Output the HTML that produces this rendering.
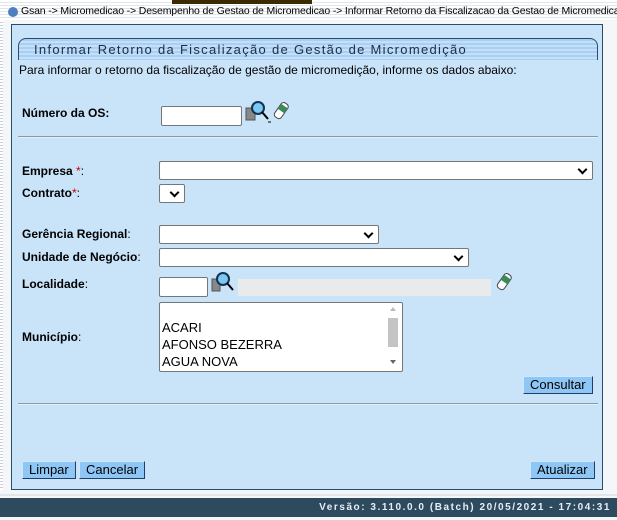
<!DOCTYPE html><html><head><meta charset="utf-8"><style>
body{margin:0;width:617px;height:520px;background:#f4f6f8;font-family:"Liberation Sans",sans-serif;position:relative;overflow:hidden;font-size:12px;color:#000}
.a{position:absolute}
.lbl{position:absolute;left:22px;font-weight:bold;font-size:12px}
.lbl span{font-weight:normal}
.red{color:#c00;font-weight:normal}
.in{position:absolute;background:#fff;border:1px solid #767676;border-radius:2px;box-sizing:border-box}
.sel:after{content:"";position:absolute;right:6px;top:4px;width:5px;height:5px;border-right:2px solid #000;border-bottom:2px solid #000;transform:rotate(45deg)}
.btn{position:absolute;background:#8ec7f5;border:1px solid #1f3f66;border-top-color:#cfe7fb;border-left-color:#cfe7fb;font-size:13px;line-height:16px;padding:0 6px;color:#000}
.hr{position:absolute;left:18px;width:580px;height:1px;background:#8a9aa8;border-bottom:1px solid #e6eef5}
</style></head><body>
<div class="a" style="left:0;top:0;width:617px;height:20px;background:repeating-linear-gradient(#fff 0 2px,#dfe6ec 2px 3px)"></div>
<div class="a" style="left:172px;top:0;width:140px;height:4px;background:#3a2c00"></div>
<div class="a" style="left:8px;top:7px;width:10px;height:10px;border-radius:50%;background:#4f7fc0"></div>
<div class="a" style="left:21px;top:5px;font-size:10.5px;white-space:nowrap;letter-spacing:-0.15px">Gsan -&gt; Micromedicao -&gt; Desempenho de Gestao de Micromedicao -&gt; Informar Retorno da Fiscalizacao da Gestao de Micromedicao</div>
<div class="a" style="left:0;top:20px;width:3px;height:470px;background:repeating-linear-gradient(#fff 0 2px,#ccd 2px 3px)"></div>
<div class="a" style="left:11px;top:24px;width:592px;height:466px;background:#c9e3f9;border:1px solid #2a4a70;box-sizing:border-box"></div>
<div class="a" style="left:18px;top:38px;width:580px;height:22px;border:1px solid #2a4a70;border-bottom:none;border-radius:8px 8px 0 0;box-sizing:border-box;background:repeating-linear-gradient(#a9d0f2 0 2px,#c4e0f8 2px 4px)"></div>
<div class="a" style="left:34px;top:42px;font-size:13px;letter-spacing:1.3px;color:#1c2e44">Informar Retorno da Fiscalização de Gestão de Micromedição</div>
<div class="a" style="left:19px;top:63px;font-size:12px">Para informar o retorno da fiscalização de gestão de micromedição, informe os dados abaixo:</div>
<div class="lbl" style="top:106px">Número da OS:</div>
<div class="in" style="left:161px;top:106px;width:81px;height:20px"></div>
<svg class="a" style="left:244px;top:100px" width="46" height="24"><rect x="2" y="8" width="9" height="12" fill="#888" stroke="#555"/><circle cx="14" cy="8" r="6" fill="#7cc8f0" stroke="#135" stroke-width="2"/><line x1="18" y1="12" x2="24" y2="19" stroke="#000" stroke-width="2"/><line x1="24" y1="22" x2="27" y2="22" stroke="#000"/><g transform="rotate(35 37 11)"><rect x="33" y="2" width="8" height="17" rx="3" fill="#fff" stroke="#444"/><rect x="33" y="5" width="8" height="6" fill="#3a8a5a"/></g></svg>
<div class="hr" style="top:136px"></div>
<div class="lbl" style="top:164px">Empresa <span class="red">*</span><span>:</span></div>
<div class="in sel" style="left:159px;top:161px;width:434px;height:19px"></div>
<div class="lbl" style="top:186px">Contrato<span class="red">*</span><span>:</span></div>
<div class="in sel" style="left:159px;top:184px;width:26px;height:19px"></div>
<div class="lbl" style="top:227px">Gerência Regional<span>:</span></div>
<div class="in sel" style="left:159px;top:225px;width:220px;height:19px"></div>
<div class="lbl" style="top:250px">Unidade de Negócio<span>:</span></div>
<div class="in sel" style="left:159px;top:248px;width:310px;height:19px"></div>
<div class="lbl" style="top:277px">Localidade<span>:</span></div>
<div class="in" style="left:159px;top:277px;width:49px;height:20px"></div>
<svg class="a" style="left:210px;top:271px" width="26" height="22"><rect x="2" y="8" width="8" height="12" fill="#888" stroke="#555"/><circle cx="13" cy="8" r="6" fill="#7cc8f0" stroke="#135" stroke-width="2"/><line x1="17" y1="12" x2="23" y2="19" stroke="#000" stroke-width="2"/></svg>
<div class="a" style="left:238px;top:279px;width:253px;height:17px;background:#e8eaec"></div>
<svg class="a" style="left:494px;top:271px" width="20" height="22"><g transform="rotate(35 10 11)"><rect x="6" y="2" width="8" height="17" rx="3" fill="#fff" stroke="#444"/><rect x="6" y="5" width="8" height="6" fill="#3a8a5a"/></g></svg>
<div class="lbl" style="top:330px">Município<span>:</span></div>
<div class="in" style="left:159px;top:302px;width:244px;height:70px;font-size:13px;padding:16px 0 0 2px;line-height:17px">ACARI<br>AFONSO BEZERRA<br>AGUA NOVA</div>
<div class="a" style="left:388px;top:318px;width:10px;height:29px;background:#c4c4c4"></div>
<div class="a" style="left:390px;top:307px;width:0;height:0;border:3px solid transparent;border-bottom:4px solid #bbb;border-top:none"></div>
<div class="a" style="left:390px;top:360px;width:0;height:0;border:3px solid transparent;border-top:4px solid #666;border-bottom:none"></div>
<div class="btn" style="left:523px;top:376px">Consultar</div>
<div class="hr" style="top:403px"></div>
<div class="btn" style="left:22px;top:461px">Limpar</div>
<div class="btn" style="left:79px;top:461px">Cancelar</div>
<div class="btn" style="left:530px;top:461px">Atualizar</div>
<div class="a" style="left:0;top:494px;width:617px;height:2px;background:#dfe6ec"></div>
<div class="a" style="left:0;top:498px;width:617px;height:19px;background:#2e4a5f"></div>
<div class="a" style="right:6px;top:502px;font-size:10px;font-weight:bold;letter-spacing:1.55px;color:#e6eef5">Versão: 3.110.0.0 (Batch) 20/05/2021 - 17:04:31</div>
</body></html>
